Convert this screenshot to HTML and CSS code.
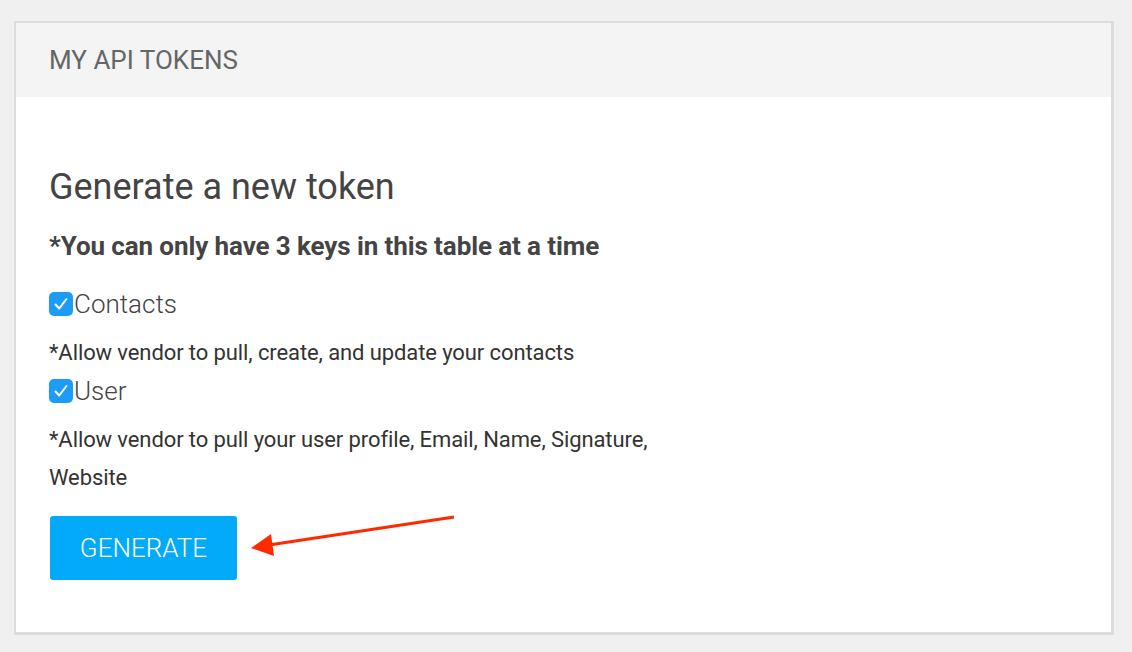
FILE: index.html
```html
<!DOCTYPE html>
<html>
<head>
<meta charset="utf-8">
<link rel="stylesheet" href="styles.css">
</head>
<body>
<div class="card">
  <div class="card-header">MY API TOKENS</div>
  <div class="card-body">
    <h2 class="title">Generate a new token</h2>
    <p class="note">*You can only have 3 keys in this table at a time</p>
    <label class="check"><span class="box"><svg viewBox="0 0 24 24" width="24" height="24"><path d="M6.5 12.5 L10.2 16.5 L17.5 7" fill="none" stroke="#fff" stroke-width="2" stroke-linecap="round" stroke-linejoin="round"/></svg></span>Contacts</label>
    <p class="desc">*Allow vendor to pull, create, and update your contacts</p>
    <label class="check check-tight"><span class="box"><svg viewBox="0 0 24 24" width="24" height="24"><path d="M6.5 12.5 L10.2 16.5 L17.5 7" fill="none" stroke="#fff" stroke-width="2" stroke-linecap="round" stroke-linejoin="round"/></svg></span>User</label>
    <p class="desc desc-wrap">*Allow vendor to pull your user profile, Email, Name, Signature, Website</p>
    <div class="actions">
      <button class="btn">GENERATE</button>
      <svg class="arrow" width="220" height="50" viewBox="0 0 220 50">
        <line x1="205" y1="1" x2="20" y2="29" stroke="#ff2a00" stroke-width="3.2"/>
        <polygon points="2,32 22,18 25,40" fill="#ff2a00"/>
      </svg>
    </div>
  </div>
</div>
</body>
</html>
```
FILE: styles.css
```css
html, body {
  margin: 0;
  padding: 0;
}
body {
  background: #f0f0f0;
  font-family: Roboto, "Liberation Sans", sans-serif;
  color: #444;
  padding: 21px 18px 0 14px;
  height: 652px;
  box-sizing: border-box;
}
.card {
  background: #fff;
  border: 2px solid #dcdcdc;
  border-right-width: 3px;
  border-bottom-width: 3px;
  height: 614px;
  box-sizing: border-box;
}
.card-header {
  background: #f4f4f4;
  height: 74px;
  box-sizing: border-box;
  padding: 0 0 0 33px;
  display: flex;
  align-items: center;
  font-size: 26px;
  color: #666;
}
.card-body {
  padding: 70px 33px 0 33px;
}
.title {
  margin: 0;
  font-weight: 400;
  font-size: 36px;
  line-height: 40px;
  color: #444;
}
.note {
  margin: 24px 0 0 0;
  font-weight: 700;
  font-size: 26px;
  line-height: 30px;
  color: #444;
  letter-spacing: -0.1px;
}
.check {
  display: flex;
  align-items: center;
  font-size: 26px;
  line-height: 30px;
  margin-top: 28px;
  color: #444;
  font-weight: 300;
}
.check-tight {
  margin-top: 4px;
}
.box {
  width: 24px;
  height: 24px;
  border-radius: 5px;
  background: #1d9bf8;
  display: inline-flex;
  align-items: center;
  justify-content: center;
  margin-right: 1px;
}
.desc {
  margin: 15px 0 0 0;
  font-size: 22px;
  line-height: 38px;
  color: #333;
  letter-spacing: -0.1px;
}
.desc-wrap {
  max-width: 640px;
}
.actions {
  position: relative;
  margin-top: 19px;
}
.btn {
  background: #02aaf9;
  color: #fff;
  border: none;
  border-radius: 3px;
  width: 187px;
  height: 64px;
  margin-left: 1px;
  font-family: Roboto, "Liberation Sans", sans-serif;
  font-size: 26px;
  font-weight: 300;
  padding: 0;
}
.arrow {
  position: absolute;
  left: 200px;
  top: 0;
  overflow: visible;
}
```
